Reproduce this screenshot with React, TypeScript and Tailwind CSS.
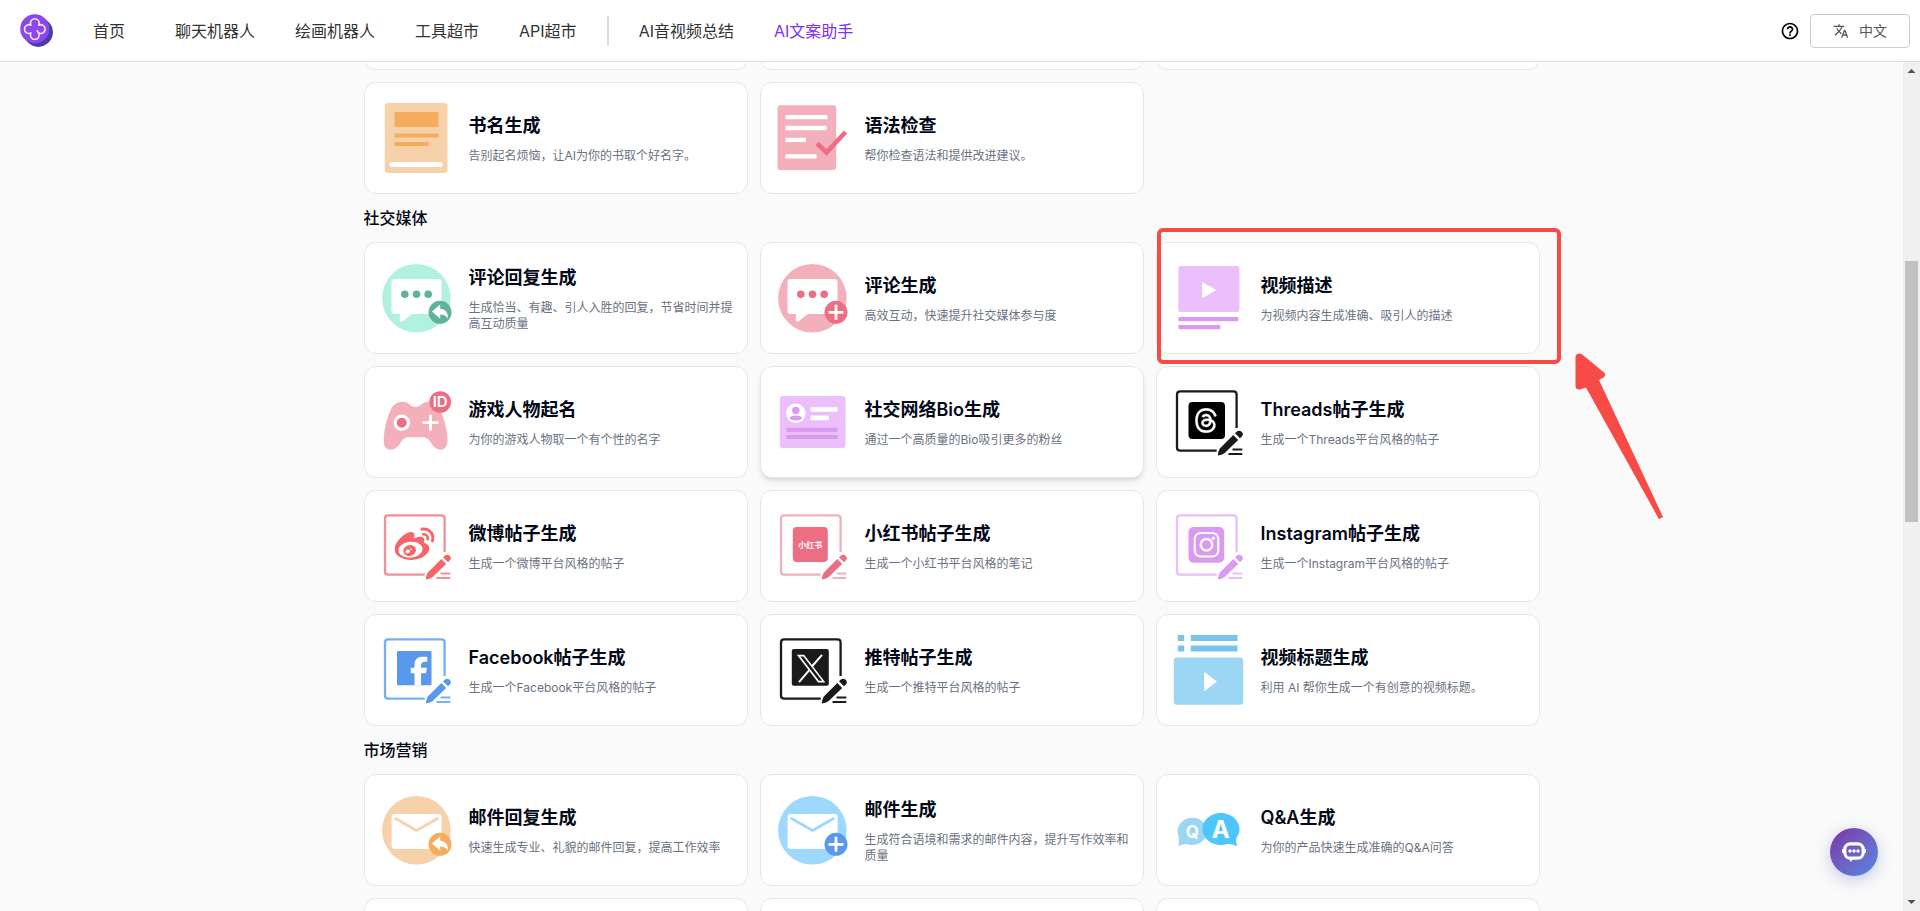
import type { ReactNode } from 'react'
import { FaFacebookF, FaThreads, FaWeibo } from 'react-icons/fa6'
import { MdHelpOutline, MdTranslate } from 'react-icons/md'

interface Tool {
  title: string
  desc: string
  icon: ReactNode
  raised?: boolean
  marked?: boolean
}

interface Section {
  name: string
  tools: Tool[]
}

function Icon({ children }: { children: ReactNode }) {
  return (
    <svg viewBox="0 0 72 72" className="size-18 shrink-0" fill="none" aria-hidden="true">
      {children}
    </svg>
  )
}

function ReplyBadge({ color }: { color: string }) {
  return (
    <>
      <circle cx="60" cy="50.3" r="11.5" fill={color} />
      <path d="M52 49.4l8.2-6.8v4.2c5 .2 8.3 4 7.6 9.8-1.9-3-4.2-4-7.6-4v4.2z" fill="#fff" />
    </>
  )
}

function PlusBadge({ color }: { color: string }) {
  return (
    <>
      <circle cx="60" cy="50.3" r="11.5" fill={color} />
      <path d="M60 42.8v15M52.5 50.3h15" stroke="#fff" strokeWidth="2.8" />
    </>
  )
}

function CommentIcon({ bg, fg, badge }: { bg: string; fg: string; badge: ReactNode }) {
  return (
    <Icon>
      <circle cx="36.4" cy="36.3" r="34.3" fill={bg} />
      <path
        d="M14.5 17h44a3 3 0 0 1 3 3v29a3 3 0 0 1-3 3H32l-9 7q-3.2 2-3.2-1.5V52h-5.3a3 3 0 0 1-3-3V20a3 3 0 0 1 3-3z"
        fill="#fff"
      />
      <circle cx="24.8" cy="32.3" r="3.8" fill={fg} />
      <circle cx="36.5" cy="32.3" r="3.8" fill={fg} />
      <circle cx="48.2" cy="32.3" r="3.8" fill={fg} />
      {badge}
    </Icon>
  )
}

function MailIcon({ bg, badge }: { bg: string; badge: ReactNode }) {
  return (
    <Icon>
      <circle cx="36.4" cy="36.3" r="34.3" fill={bg} />
      <rect x="11.6" y="20" width="50" height="35" rx="3" fill="#fff" />
      <path d="M15.5 24.5l21 12 21-12" stroke={bg} strokeWidth="2.6" strokeLinecap="round" strokeLinejoin="round" />
      {badge}
    </Icon>
  )
}

// Frame with a pencil in the corner, shared by all "write a post" tools
function PostIcon({ frame, pen, children }: { frame: string; pen: string; children: ReactNode }) {
  return (
    <Icon>
      <path
        d="M64.6 42V8.5q0-3.2-3.2-3.2H8.2Q5 5.3 5 8.5v52.9q0 3.2 3.2 3.2h36.5"
        stroke={frame}
        strokeWidth="2.3"
      />
      <path d="M61.3 49l4.9 4.9-13.5 13.2q-3 2.4-6.9 2.4.2-4 2-7.1z" fill={pen} />
      <path d="M63 47.2l2.2-1.9q2.3-1.5 4.4.5t.6 4.3l-2.2 2.1z" fill={pen} />
      <path d="M60.5 63.5h9.800M56.5 68h13.8" stroke={frame} strokeWidth="2" />
      {children}
    </Icon>
  )
}

const sections: Section[] = [
  {
    name: '社交媒体',
    tools: [
      {
        title: '评论回复生成',
        desc: '生成恰当、有趣、引人入胜的回复，节省时间并提高互动质量',
        icon: <CommentIcon bg="#b0f2df" fg="#5fb39c" badge={<ReplyBadge color="#5fb39c" />} />,
      },
      {
        title: '评论生成',
        desc: '高效互动，快速提升社交媒体参与度',
        icon: <CommentIcon bg="#f3b0ba" fg="#ed6d83" badge={<PlusBadge color="#ed6d83" />} />,
      },
      {
        title: '视频描述',
        desc: '为视频内容生成准确、吸引人的描述',
        marked: true,
        icon: (
          <Icon>
            <rect x="6.4" y="4" width="61" height="46" rx="2" fill="#ebbffb" />
            <path d="M30.5 20.5v15l13-7.4z" fill="#fff" stroke="#fff" strokeLinejoin="round" />
            <rect x="6.4" y="55" width="60" height="4.3" rx="1" fill="#d99af0" />
            <rect x="6.4" y="63" width="42" height="4.3" rx="1" fill="#d99af0" />
          </Icon>
        ),
      },
      {
        title: '游戏人物起名',
        desc: '为你的游戏人物取一个有个性的名字',
        icon: (
          <Icon>
            <path
              d="M14 19q4-3.3 9-3.3 4 0 7 3 5.5 4.6 11 0 3-3 7-3 6 0 9.5 4.3C63 27 68 45 67.5 55c-.5 6-3 8.7-7 8.7-4.5 0-7.5-3.7-10-7.7-2.5-3.8-5-4.7-8-4.7H29c-3 0-5.500.9-8 4.7-2.5 4-5.5 7.7-10 7.7C6 63.7 4 61 3.8 55 3.5 45 8 25 14 19z"
              fill="#f3b0ba"
            />
            <circle cx="21.8" cy="36.7" r="6.6" fill="#ed6d83" stroke="#fff" strokeWidth="3.2" />
            <path d="M50.5 28.7v16M42.5 36.7h16" stroke="#fff" strokeWidth="2.8" />
            <circle cx="60.2" cy="16" r="10.8" fill="#ed6d83" />
            <text x="60.2" y="21.3" textAnchor="middle" fill="#fff" className="text-[15px] font-semibold">
              ID
            </text>
          </Icon>
        ),
      },
      {
        title: '社交网络Bio生成',
        desc: '通过一个高质量的Bio吸引更多的粉丝',
        raised: true,
        icon: (
          <Icon>
            <rect x="3.8" y="10" width="65.7" height="52" rx="3" fill="#ebbffb" />
            <circle cx="19.8" cy="27.3" r="9.7" fill="#fff" />
            <circle cx="19.8" cy="24.5" r="3.7" fill="#d99af0" />
            <ellipse cx="19.8" cy="32" rx="6" ry="2.6" fill="#d99af0" />
            <path d="M34.5 23.5h27M34.5 31.9h18.3" stroke="#fff" strokeWidth="4.6" />
            <path d="M10.5 43.8h51M10.5 51h51" stroke="#d99af0" strokeWidth="4.2" />
          </Icon>
        ),
      },
      {
        title: 'Threads帖子生成',
        desc: '生成一个Threads平台风格的帖子',
        icon: (
          <PostIcon frame="#1a1a1a" pen="#1a1a1a">
            <rect x="16.5" y="16" width="36.5" height="37" rx="4" fill="#000" />
            <FaThreads x="21" y="21.5" size={26} color="#fff" stroke="#fff" strokeWidth="10" />
          </PostIcon>
        ),
      },
      {
        title: '微博帖子生成',
        desc: '生成一个微博平台风格的帖子',
        icon: (
          <PostIcon frame="#f58e94" pen="#f5666b">
            <FaWeibo x="14.5" y="15" size={40} color="#f5666b" />
          </PostIcon>
        ),
      },
      {
        title: '小红书帖子生成',
        desc: '生成一个小红书平台风格的笔记',
        icon: (
          <PostIcon frame="#f3b0ba" pen="#ed6d83">
            <rect x="16.8" y="17" width="35" height="35" rx="4" fill="#ed6d83" />
            <text x="34.3" y="37.6" textAnchor="middle" fill="#fff" className="text-[8px] font-bold">
              小红书
            </text>
          </PostIcon>
        ),
      },
      {
        title: 'Instagram帖子生成',
        desc: '生成一个Instagram平台风格的帖子',
        icon: (
          <PostIcon frame="#ebbffb" pen="#d99af0">
            <rect x="16.5" y="17" width="35.7" height="35.7" rx="5" fill="#d99af0" />
            <rect x="22.7" y="23" width="23.6" height="23.6" rx="6" stroke="#fff" strokeWidth="2" />
            <circle cx="34.5" cy="34.8" r="5.8" stroke="#fff" strokeWidth="2.4" />
            <circle cx="41.3" cy="28.2" r="1.6" fill="#fff" />
          </PostIcon>
        ),
      },
      {
        title: 'Facebook帖子生成',
        desc: '生成一个Facebook平台风格的帖子',
        icon: (
          <PostIcon frame="#74b0f5" pen="#5998ed">
            <rect x="17" y="17" width="34.5" height="34.2" rx="1" fill="#5998ed" />
            <FaFacebookF x="24.5" y="22.4" size={29} color="#fff" />
          </PostIcon>
        ),
      },
      {
        title: '推特帖子生成',
        desc: '生成一个推特平台风格的帖子',
        icon: (
          <PostIcon frame="#1a1a1a" pen="#1a1a1a">
            <rect x="15.8" y="15" width="37" height="36.8" rx="2" fill="#1a1a1a" />
            <path d="M22.5 21.6h5.2l20 26h-5.2z" stroke="#fff" strokeWidth="1.6" />
            <path d="M46 20.8L36.3 32M33.5 35.8L23 48.2" stroke="#fff" strokeWidth="2" />
          </PostIcon>
        ),
      },
      {
        title: '视频标题生成',
        desc: '利用 AI 帮你生成一个有创意的视频标题。',
        icon: (
          <Icon>
            <path d="M5.8 4h6.4M18.8 4h46.7M5.8 14.5h6.4M18.8 14.5h46.7" stroke="#76c5ea" strokeWidth="6" />
            <rect x="1.8" y="23.4" width="69.4" height="47.3" rx="3" fill="#9bd7f4" />
            <path d="M32.7 38.5v18l11.6-9z" fill="#fff" stroke="#fff" strokeLinejoin="round" />
          </Icon>
        ),
      },
    ],
  },
  {
    name: '市场营销',
    tools: [
      {
        title: '邮件回复生成',
        desc: '快速生成专业、礼貌的邮件回复，提高工作效率',
        icon: <MailIcon bg="#f7d1aa" badge={<ReplyBadge color="#f5ad5c" />} />,
      },
      {
        title: '邮件生成',
        desc: '生成符合语境和需求的邮件内容，提升写作效率和质量',
        icon: <MailIcon bg="#9fd8ff" badge={<PlusBadge color="#5998ed" />} />,
      },
      {
        title: 'Q&A生成',
        desc: '为你的产品快速生成准确的Q&A问答',
        icon: (
          <Icon>
            <ellipse cx="20.3" cy="37.3" rx="14.8" ry="13.6" fill="#9bd7f4" />
            <path d="M6.5 42q1 5 0 10 4-2.2 9-2z" fill="#9bd7f4" />
            <ellipse cx="48.9" cy="35" rx="18.6" ry="16" fill="#4ec6fb" />
            <path d="M64.5 41q-1 6 .5 11.2-5-2.8-11-2.2z" fill="#4ec6fb" />
            <text x="20.4" y="43.8" textAnchor="middle" fill="#fff" className="text-[17px] font-bold">
              Q
            </text>
            <text x="48.8" y="44.2" textAnchor="middle" fill="#fff" className="text-[24px] font-bold">
              A
            </text>
          </Icon>
        ),
      },
    ],
  },
]

const writingTools: Tool[] = [
  {
    title: '书名生成',
    desc: '告别起名烦恼，让AI为你的书取个好名字。',
    icon: (
      <Icon>
        <rect x="4.8" y="1" width="62.7" height="70" rx="3" fill="#f7d1aa" />
        <rect x="14.5" y="10" width="44" height="15" fill="#f5ad5c" />
        <path d="M14.5 33.5h44M14.5 42h34" stroke="#f5ad5c" strokeWidth="4.2" />
        <rect x="9.5" y="60" width="53" height="5" rx="2" fill="#fff" />
      </Icon>
    ),
  },
  {
    title: '语法检查',
    desc: '帮你检查语法和提供改进建议。',
    icon: (
      <Icon>
        <rect x="1.5" y="3.3" width="58.7" height="64.7" rx="3" fill="#f3b0ba" />
        <path d="M9.5 15.2h42M9.5 26h41M9.5 37.8h20.5M9.5 54.4h31" stroke="#fff" strokeWidth="4.3" />
        <path d="M41 41.5l9.5 9 19-20.5" stroke="#ed6d83" strokeWidth="4.6" />
      </Icon>
    ),
  },
]

function Marker() {
  return (
    <>
      <span className="pointer-events-none absolute -top-[15px] -right-[22px] -bottom-[11px] left-0 rounded-md border-4 border-[#f94b46]" />
      <svg
        viewBox="0 0 90 170"
        className="pointer-events-none absolute top-27 left-full ml-9 h-[170px] w-[90px]"
        fill="#f94b46"
        aria-hidden="true"
      >
        <path d="M.5 6q.2-3.500 4-3.500 1.500 0 3 1.200L29 21.500q2.500 3-.5 5L24 29 88 166l-4 2.200L11 36.500l-6 2q-4 .5-4.500-3z" />
      </svg>
    </>
  )
}

function ToolCard({ tool }: { tool: Tool }) {
  return (
    <a
      href="#"
      className={`relative flex min-h-28 items-center gap-[17px] rounded-xl border border-[#e2e8f0] bg-white pr-3 pl-[15px] ${
        tool.raised ? 'shadow-md' : ''
      } ${tool.marked ? 'z-10' : ''}`}
    >
      {tool.icon}
      <div className="min-w-0 flex-1">
        <h3 className="text-lg leading-7 font-semibold text-[#020817]">{tool.title}</h3>
        <p className="mt-2 text-xs leading-4 text-gray-500">{tool.desc}</p>
      </div>
      {tool.marked && <Marker />}
    </a>
  )
}

function EmptyRow() {
  return (
    <div className="grid grid-cols-3 gap-3">
      {[0, 1, 2].map((i) => (
        <div key={i} className="h-28 rounded-xl border border-[#e2e8f0] bg-white" />
      ))}
    </div>
  )
}

function Logo() {
  return (
    <svg viewBox="0 0 33 33" className="size-[33px]" fill="none" aria-hidden="true">
      <circle cx="18.3" cy="18.3" r="14.6" fill="#4a3da8" />
      <circle cx="14.8" cy="14.8" r="14.6" fill="#8b46ee" />
      <path
        d="M16.8 16.2l1.9 2.8a4.4 4.4 0 1 1-7.8 0 4.4 4.4 0 1 1 0-7.8 4.4 4.4 0 1 1 7.8 0 4.4 4.4 0 1 1 0 7.8"
        stroke="#f3e8ff"
        strokeWidth="1.6"
        strokeLinejoin="round"
      />
    </svg>
  )
}

function Header() {
  return (
    <header className="flex h-[62px] shrink-0 items-center justify-between border-b border-[#dcdcdc] bg-white pr-2.5 pl-5">
      <nav className="flex items-center gap-10 text-base text-[#333]">
        <a href="#" aria-label="Home">
          <Logo />
        </a>
        <a href="#" className="mr-2.5">首页</a>
        <a href="#">聊天机器人</a>
        <a href="#">绘画机器人</a>
        <a href="#">工具超市</a>
        <a href="#">API超市</a>
        <div className="-mx-2.5 h-[30px] w-0.5 bg-[#dcdcdc]" />
        <a href="#">AI音视频总结</a>
        <a href="#" className="text-[#7d2ff5]">AI文案助手</a>
      </nav>
      <div className="flex items-center gap-2.5">
        <button type="button" aria-label="Help">
          <MdHelpOutline size={20} color="#000" />
        </button>
        <button
          type="button"
          className="flex h-[34px] w-[100px] items-center justify-center gap-2.5 rounded border border-[#ccc] text-sm text-[#555]"
        >
          <MdTranslate size={16} />
          中文
        </button>
      </div>
    </header>
  )
}

function ScrollBar() {
  return (
    <div className="flex w-[17px] shrink-0 flex-col items-center bg-[#f0f0f0]">
      <svg viewBox="0 0 17 17" className="size-[17px] shrink-0" fill="#505050" aria-hidden="true">
        <path d="M4.5 11l4-4 4 4z" />
      </svg>
      <div className="flex-[182]" />
      <div className="w-[13px] flex-[261] bg-[#c1c1c1]" />
      <div className="flex-[372]" />
      <svg viewBox="0 0 17 17" className="size-[17px] shrink-0" fill="#505050" aria-hidden="true">
        <path d="M4.5 6l4 4 4-4z" />
      </svg>
    </div>
  )
}

export default function App() {
  return (
    <div className="flex h-screen flex-col overflow-hidden bg-[#fafafa] font-[Inter,'Noto_Sans_CJK_SC',sans-serif]">
      <Header />
      <div className="flex min-h-0 flex-1">
        <main className="min-w-0 flex-1 overflow-hidden">
          <div className="mx-auto -mt-26 max-w-[1176px]">
            <EmptyRow />
            <div className="mt-3 grid grid-cols-3 gap-3">
              {writingTools.map((tool) => (
                <ToolCard key={tool.title} tool={tool} />
              ))}
            </div>
            {sections.map((section) => (
              <section key={section.name}>
                <h2 className="py-3 text-base leading-6 font-medium text-[#020817]">{section.name}</h2>
                <div className="grid grid-cols-3 gap-3">
                  {section.tools.map((tool) => (
                    <ToolCard key={tool.title} tool={tool} />
                  ))}
                </div>
              </section>
            ))}
            <div className="mt-3">
              <EmptyRow />
            </div>
          </div>
        </main>
        <ScrollBar />
      </div>

      {/* Floating chat button */}
      <button
        type="button"
        aria-label="Chat"
        className="fixed right-[42px] bottom-[35px] flex size-12 items-center justify-center rounded-full bg-linear-to-br from-[#7a32a4] to-[#4b88e6] shadow-[0_4px_16px_rgba(80,90,180,0.3)]"
      >
        <svg viewBox="0 0 24 20" className="h-5 w-6" fill="none" aria-hidden="true">
          <rect x="2.8" y="1.8" width="18.4" height="14.4" rx="5.5" stroke="#fff" strokeWidth="3.2" />
          <path d="M0 9h2M22 9h2" stroke="#fff" strokeWidth="4" />
          <path d="M7 16l1.5 4 4-4z" fill="#fff" />
          <circle cx="8" cy="9" r="1.7" fill="#fff" />
          <circle cx="12" cy="9" r="1.7" fill="#fff" />
          <circle cx="16" cy="9" r="1.7" fill="#fff" />
        </svg>
      </button>
    </div>
  )
}
